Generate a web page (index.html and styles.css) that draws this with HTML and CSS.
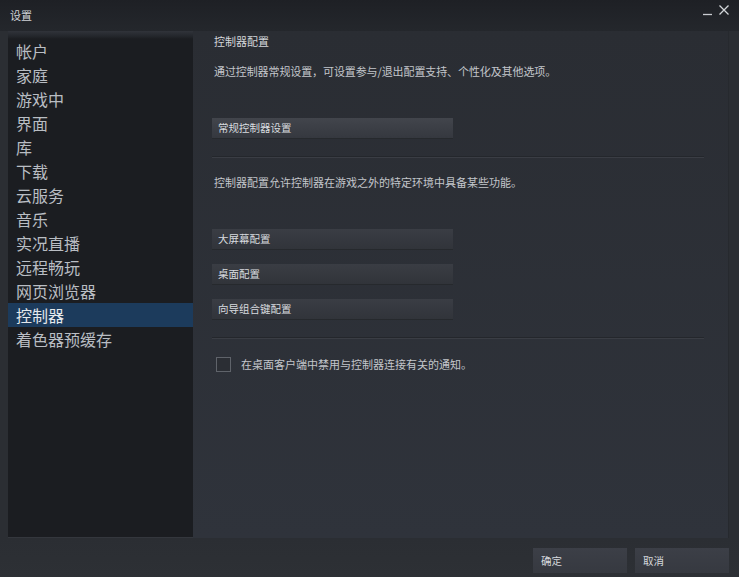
FILE: index.html
```html
<!DOCTYPE html>
<html lang="zh-CN">
<head>
<meta charset="utf-8">
<title>设置</title>
<link rel="stylesheet" href="styles.css">
</head>
<body>
<div class="window">
  <div class="titlebar">
    <span class="title">设置</span>
    <div class="controls">
      <svg class="ctl" width="12" height="12" viewBox="0 0 12 12"><path d="M1 10.5H10" stroke="#c9ccd1" stroke-width="1.3"/></svg>
      <svg class="ctl" width="12" height="12" viewBox="0 0 12 12"><path d="M1.5 1.5L10.5 10.5M10.5 1.5L1.5 10.5" stroke="#d3d6da" stroke-width="1.3"/></svg>
    </div>
  </div>
  <div class="main">
    <nav class="sidebar">
      <div class="item">帐户</div>
      <div class="item">家庭</div>
      <div class="item">游戏中</div>
      <div class="item">界面</div>
      <div class="item">库</div>
      <div class="item">下载</div>
      <div class="item">云服务</div>
      <div class="item">音乐</div>
      <div class="item">实况直播</div>
      <div class="item">远程畅玩</div>
      <div class="item">网页浏览器</div>
      <div class="item active">控制器</div>
      <div class="item">着色器预缓存</div>
    </nav>
    <section class="content">
      <div class="heading">控制器配置</div>
      <div class="desc">通过控制器常规设置，可设置参与/退出配置支持、个性化及其他选项。</div>
      <div class="btn btn-first">常规控制器设置</div>
      <div class="sep sep-first"></div>
      <div class="desc desc-second">控制器配置允许控制器在游戏之外的特定环境中具备某些功能。</div>
      <div class="btn btn-big">大屏幕配置</div>
      <div class="btn btn-next">桌面配置</div>
      <div class="btn btn-next">向导组合键配置</div>
      <div class="sep sep-second"></div>
      <label class="check-row">
        <span class="checkbox"></span>
        <span class="check-label">在桌面客户端中禁用与控制器连接有关的通知。</span>
      </label>
    </section>
  </div>
  <div class="footer">
    <div class="fbtn">确定</div>
    <div class="fbtn">取消</div>
  </div>
</div>
</body>
</html>
```

FILE: styles.css
```css
* { box-sizing: border-box; }
html, body {
  margin: 0;
  padding: 0;
  width: 739px;
  height: 577px;
  overflow: hidden;
  background: #2a2d32;
  font-family: "Noto Sans CJK SC", "Noto Sans", sans-serif;
}
.window {
  width: 739px;
  height: 577px;
  display: flex;
  flex-direction: column;
  background: #2b2e33;
}
.titlebar {
  height: 31px;
  flex: none;
  display: flex;
  align-items: center;
  justify-content: space-between;
  padding: 0 10px 0 10px;
  background: linear-gradient(#1e2025, #24272c);
}
.title {
  color: #d0d3d8;
  font-size: 11px;
  line-height: 14px;
  margin-top: -2px;
}
.controls {
  display: flex;
  gap: 4px;
  margin-top: -12px;
  margin-right: -1px;
}
.ctl { display: block; }
.main {
  flex: none;
  height: 507px;
  display: flex;
  padding-left: 8px;
  padding-right: 10px;
}
.sidebar {
  width: 185px;
  flex: none;
  background: linear-gradient(#30333a 0, #24272c 5px, #1b1d21 8px, #1b1d21 100%);
  padding-top: 8px;
  border-bottom: 1px solid #34373d;
}
.item {
  height: 24px;
  line-height: 24px;
  font-size: 16px;
  color: #b9bdc3;
  padding-left: 8px;
}
.item.active {
  background: #1c3b5c;
  color: #e4e8ec;
}
.content {
  flex: 1;
  background: linear-gradient(#2a2d33, #2f333b);
  padding: 2px 24px 0 19px;
  display: flex;
  flex-direction: column;
  align-items: flex-start;
  border-right: 1px solid #26292e;
}
.heading {
  font-size: 11px;
  line-height: 16px;
  color: #d3d6da;
  margin-left: 2px;
}
.desc {
  font-size: 11px;
  line-height: 16px;
  color: #c3c6cb;
  margin-left: 2px;
  margin-top: 14px;
  letter-spacing: -0.1px;
}
.desc-second { margin-top: 16px; letter-spacing: 0; }
.btn {
  width: 241px;
  height: 20px;
  line-height: 20px;
  font-size: 10.5px;
  color: #d8dbdf;
  padding-left: 6px;
  background: linear-gradient(#3a3d44, #31343a);
  box-shadow: 0 1px 0 #26292d;
}
.btn-first {
  margin-top: 39px;
  background: linear-gradient(#42454c, #35383f);
}
.btn-big { margin-top: 39px; }
.btn-next { margin-top: 15px; }
.sep {
  align-self: stretch;
  height: 2px;
  border-top: 1px solid #24272c;
  border-bottom: 1px solid #3a3d44;
}
.sep-first { margin-top: 18px; }
.sep-second { margin-top: 18px; }
.check-row {
  display: flex;
  align-items: center;
  margin-top: 17px;
  margin-left: 4px;
}
.checkbox {
  width: 15px;
  height: 15px;
  border: 1px solid #5f636a;
  background: #2b2e34;
}
.check-label {
  font-size: 11px;
  line-height: 16px;
  color: #c3c6cb;
  margin-left: 10px;
}
.footer {
  flex: 1;
  display: flex;
  justify-content: flex-end;
  align-items: flex-start;
  gap: 8px;
  padding: 10px 10px 0 0;
  background: linear-gradient(#2b2e33, #2d3035);
}
.fbtn {
  width: 94px;
  height: 25px;
  line-height: 25px;
  font-size: 10.5px;
  color: #d6d9dd;
  padding-left: 8px;
  background: linear-gradient(#3c3f47, #363940);
}
```
